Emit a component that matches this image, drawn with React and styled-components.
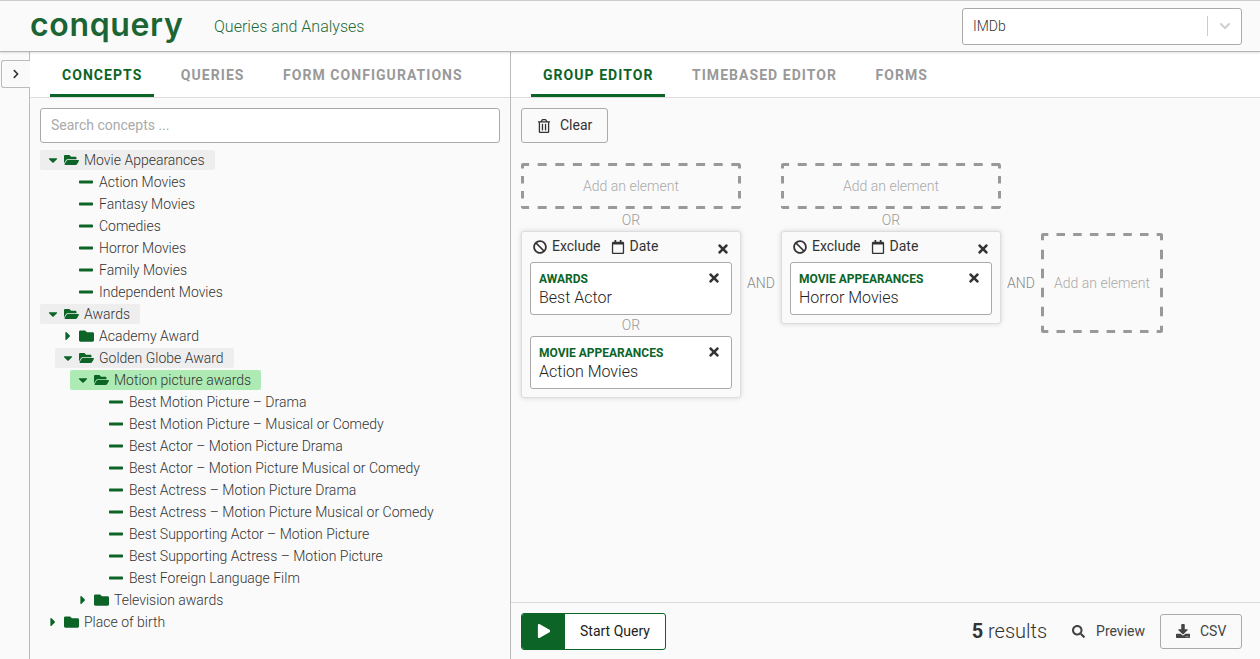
import React from "react";
import styled, { createGlobalStyle } from "styled-components";
import { FaFolder, FaFolderOpen, FaMinus, FaCaretDown, FaCaretRight, FaBan, FaRegCalendar, FaTimes, FaRegTrashAlt, FaPlay, FaSearch, FaDownload, FaChevronRight, FaChevronDown } from "react-icons/fa";

const green = "#0c6427";

const Global = createGlobalStyle`
  html, body { margin: 0; padding: 0; height: 100%; overflow: hidden; }
  body { font-family: Roboto, "Liberation Sans", sans-serif; background: #fafafa; color: #333; }
  * { box-sizing: border-box; }
`;

const Page = styled.div`
  width: 1260px; height: 659px; display: flex; flex-direction: column; overflow: hidden;
`;
const Header = styled.header`
  height: 52px; flex: none; display: flex; align-items: center; background: #fafafa;
  border-top: 1px solid #ccc; border-bottom: 1px solid #b5b5b5; box-shadow: 0 1px 2px rgba(0,0,0,.12);
  padding: 0 18px 0 30px; position: relative; z-index: 2;
`;
const Logo = styled.div`
  font-family: Inter, sans-serif; font-weight: 600; font-size: 32px; letter-spacing: 0.65px; color: #1b6535;
  line-height: 52px; width: 184px; margin-top: -3px;
`;
const Subtitle = styled.div`
  font-size: 16px; color: #1a6b3a; font-weight: 300; flex: 1;
`;
const Select = styled.div`
  width: 280px; height: 37px; background: #fff; border: 1px solid #aaa; border-radius: 3px;
  display: flex; align-items: center; padding-left: 10px; font-size: 14px; font-weight: 300; color: #333;
  span { flex: 1; }
`;
const SelectDivider = styled.i`
  width: 1px; height: 20px; background: #ccc; display: block;
`;
const SelectArrow = styled.div`
  width: 33px; display: flex; justify-content: center; color: #ccc; font-size: 12px;
`;
const Body = styled.div`flex: 1; display: flex; min-height: 0;`;
const Rail = styled.div`
  width: 30px; flex: none; border-right: 1px solid #bbb; padding-top: 8px; display: flex; flex-direction: column;
`;
const RailButton = styled.div`
  width: 29px; height: 28px; margin-left: 1px; background: #fafafa; border: 1px solid #bbb; border-right: none;
  border-radius: 3px 0 0 3px; display: flex; align-items: center; justify-content: center; color: #333; font-size: 10px;
`;
const Left = styled.section`
  width: 481px; flex: none; border-right: 1px solid #bbb; display: flex; flex-direction: column;
`;
const Tabs = styled.nav`
  height: 46px; flex: none; background: #fff; border-bottom: 1px solid #ddd; display: flex; padding-left: 20px; gap: 14.5px;
`;
const Tab = styled.div`
  height: 45px; padding: 15px 12px 0; font-size: 14px; font-weight: 700; letter-spacing: 1.05px; white-space: nowrap;
  color: ${p => p.$active ? green : "#999"};
  border-bottom: 3px solid ${p => p.$active ? green : "transparent"};
`;
const LeftContent = styled.div`padding: 10px; flex: 1; display: flex; flex-direction: column; align-items: stretch;`;
const Search = styled.div`
  height: 35px; background: #fff; border: 1px solid #aaa; border-radius: 3px; font-size: 14px; color: #aaa;
  display: flex; align-items: center; padding: 0 10px 2px; margin-bottom: 6px;
`;
const Row = styled.div`
  height: 22px; display: flex; align-items: center; padding-left: ${p => p.$depth * 15}px;
`;
const RowInner = styled.div`
  height: 20px; display: inline-flex; align-items: center; border-radius: 2px; font-size: 14px; font-weight: 300; color: #333;
  padding-right: 10px; white-space: nowrap;
  background: ${p => p.$bg || "transparent"};
`;
const Caret = styled.span`
  width: 14px; margin-left: 7px; margin-right: 2px; display: flex; justify-content: center; color: ${green}; font-size: 14px;
  svg { margin-left: -2px; }
`;
const Folder = styled.span`
  width: 16px; margin-right: 5px; display: flex; color: ${green}; font-size: 16px;
  svg { margin-left: 1px; }
`;
const Leaf = styled.span`
  width: 16px; display: flex; color: ${green}; font-size: 16px; margin-left: 38px; margin-right: 5px; flex: none;
`;
const Right = styled.section`flex: 1; display: flex; flex-direction: column; min-width: 0;`;
const RightMain = styled.div`flex: 1; padding: 10px; min-height: 0;`;
const ClearButton = styled.div`
  width: 87px; height: 35px; border: 1px solid #aaa; border-radius: 3px; font-size: 14px; color: #333;
  display: flex; align-items: center; padding: 0 0 2px 15px; gap: 9px; margin-bottom: 20px;
  svg { font-size: 14px; margin-top: 2px; }
`;
const Groups = styled.div`display: flex; align-items: flex-start;`;
const Column = styled.div`display: flex; flex-direction: column; width: 220px; align-items: stretch;`;
const Dropzone = styled.div`
  height: ${p => p.$h}px; width: ${p => p.$w}px; margin-top: ${p => p.$top || 0}px; color: #aaa; font-size: 14px; font-weight: 300;
  display: flex; align-items: center; justify-content: center; flex: none; position: relative;
`;
const DashFrame = styled.svg`
  position: absolute; inset: 0; width: 100%; height: 100%; border-radius: 3px;
`;
const Or = styled.div`
  height: ${p => p.$h || 22}px; line-height: ${p => p.$h || 22}px; text-align: center; font-size: 14px; font-weight: 300; color: #999; flex: none;
`;
const And = styled.div`
  width: 40px; flex: none; text-align: center; font-size: 14px; font-weight: 300; color: #888; margin-top: 110px; line-height: 20px;
`;
const Card = styled.div`
  background: #fafafa; border: 1px solid #ddd; border-radius: 3px; box-shadow: 0 0 5px rgba(0,0,0,.15); padding: 0 8px 8px;
`;
const CardHead = styled.div`
  height: 30px; display: flex; align-items: center; font-size: 14px; color: #333; padding: 0 0 2px 3px;
`;
const HeadItem = styled.span`
  display: inline-flex; align-items: center; gap: 5px; margin-right: 10px; svg { font-size: 14px; margin-top: 1px; }
`;
const CardClose = styled.span`
  margin-left: auto; margin-right: 2px; margin-top: 6px; display: flex; font-size: 14px; color: #333;
`;
const Node = styled.div`
  height: 53px; background: #fff; border: 1px solid #aaa; border-radius: 3px; padding: 9px 8px 0; position: relative;
`;
const NodeLabel = styled.div`
  font-size: 12px; line-height: 14px; font-weight: 700; color: ${green};
`;
const NodeTitle = styled.div`
  font-size: 16px; line-height: 22px; font-weight: 300; color: #222; margin-top: 1px;
`;
const NodeClose = styled.span`
  position: absolute; right: 10px; top: 8px; font-size: 14px; display: flex; color: #333;
`;
const Footer = styled.footer`
  height: 57px; flex: none; border-top: 1px solid #ddd; display: flex; align-items: center; padding: 0 18px 0 10px;
`;
const StartButton = styled.div`
  width: 145px; height: 37px; background: #fff; border: 1px solid ${green}; border-radius: 3px; display: flex; align-items: center; overflow: hidden;
  font-size: 14px; color: #222;
`;
const PlayBox = styled.span`
  width: 43px; height: 100%; background: ${green}; color: #fff; display: flex; align-items: center; justify-content: center; font-size: 14px; margin-right: 15px;
`;
const Results = styled.div`
  margin-left: auto; font-size: 20px; font-weight: 300; color: #333; margin-right: 25px;
  b { font-weight: 700; }
`;
const Preview = styled.div`
  display: flex; align-items: center; gap: 11px; font-size: 14px; color: #444; margin-right: 15px; svg { font-size: 13px; }
`;
const CsvButton = styled.div`
  width: 82px; height: 35px; border: 1px solid #aaa; border-radius: 3px; display: flex; align-items: center; padding-left: 15px; gap: 10px; font-size: 14px; color: #444;
`;

const tree = [
  [0, "open", "Movie Appearances", "#eee"],
  [1, "leaf", "Action Movies"], [1, "leaf", "Fantasy Movies"], [1, "leaf", "Comedies"], [1, "leaf", "Horror Movies"], [1, "leaf", "Family Movies"], [1, "leaf", "Independent Movies"],
  [0, "open", "Awards", "#eee"],
  [1, "closed", "Academy Award"],
  [1, "open", "Golden Globe Award", "#eee"],
  [2, "open", "Motion picture awards", "#aeeab4"],
  [3, "leaf", "Best Motion Picture – Drama"], [3, "leaf", "Best Motion Picture – Musical or Comedy"], [3, "leaf", "Best Actor – Motion Picture Drama"], [3, "leaf", "Best Actor – Motion Picture Musical or Comedy"], [3, "leaf", "Best Actress – Motion Picture Drama"], [3, "leaf", "Best Actress – Motion Picture Musical or Comedy"], [3, "leaf", "Best Supporting Actor – Motion Picture"], [3, "leaf", "Best Supporting Actress – Motion Picture"], [3, "leaf", "Best Foreign Language Film"],
  [2, "closed", "Television awards"],
  [0, "closed", "Place of birth"],
];

function TreeRow({ depth, kind, label, bg }) {
  if (kind === "leaf") {
    return <Row $depth={depth - 1}><RowInner><Leaf><FaMinus /></Leaf>{label}</RowInner></Row>;
  }
  const open = kind === "open";
  return (
    <Row $depth={depth}>
      <RowInner $bg={bg}>
        <Caret>{open ? <FaCaretDown /> : <FaCaretRight />}</Caret>
        <Folder>{open ? <FaFolderOpen /> : <FaFolder />}</Folder>
        {label}
      </RowInner>
    </Row>
  );
}

function AddElement({ w, h, top, hDash, vDash }) {
  const edge = (x1, y1, x2, y2, [period, dash, offset]) => (
    <line x1={x1} y1={y1} x2={x2} y2={y2} stroke="#999" strokeWidth="3"
      strokeDasharray={`${dash} ${period - dash}`} strokeDashoffset={offset} />
  );
  return (
    <Dropzone $w={w} $h={h} $top={top}>
      <DashFrame viewBox={`0 0 ${w} ${h}`}>
        {edge(0, 1.5, w, 1.5, hDash)}
        {edge(0, h - 1.5, w, h - 1.5, hDash)}
        {edge(1.5, 0, 1.5, h, vDash)}
        {edge(w - 1.5, 0, w - 1.5, h, vDash)}
      </DashFrame>
      Add an element
    </Dropzone>
  );
}

function QueryCard({ nodes }) {
  return (
    <Card>
      <CardHead>
        <HeadItem><FaBan />Exclude</HeadItem>
        <HeadItem><FaRegCalendar />Date</HeadItem>
        <CardClose><FaTimes /></CardClose>
      </CardHead>
      {nodes.map(([l, t], i) => (
        <React.Fragment key={t}>
          {i > 0 && <Or $h={21}>OR</Or>}
          <Node>
            <NodeLabel>{l}</NodeLabel>
            <NodeTitle>{t}</NodeTitle>
            <NodeClose><FaTimes /></NodeClose>
          </Node>
        </React.Fragment>
      ))}
    </Card>
  );
}

const wideH = [17.6, 9, 0.9];
const wideV = [15, 7.5, 2];
const tallH = [16.7, 8.5, 1.2];
const tallV = [19, 9.5, 2.25];

export default function App() {
  return (
    <Page>
      <Global />
      <Header>
        <Logo>conquery</Logo>
        <Subtitle>Queries and Analyses</Subtitle>
        <Select>
          <span>IMDb</span>
          <SelectDivider />
          <SelectArrow><FaChevronDown /></SelectArrow>
        </Select>
      </Header>
      <Body>
        <Rail><RailButton><FaChevronRight /></RailButton></Rail>
        <Left>
          <Tabs>
            <Tab $active>CONCEPTS</Tab>
            <Tab>QUERIES</Tab>
            <Tab>FORM CONFIGURATIONS</Tab>
          </Tabs>
          <LeftContent>
            <Search>Search concepts ...</Search>
            {tree.map(([d, k, l, bg]) => <TreeRow key={l} depth={d} kind={k} label={l} bg={bg} />)}
          </LeftContent>
        </Left>
        <Right>
          <Tabs>
            <Tab $active>GROUP EDITOR</Tab>
            <Tab>TIMEBASED EDITOR</Tab>
            <Tab>FORMS</Tab>
          </Tabs>
          <RightMain>
            <ClearButton><FaRegTrashAlt />Clear</ClearButton>
            <Groups>
              <Column>
                <AddElement w={220} h={46} hDash={wideH} vDash={wideV} />
                <Or>OR</Or>
                <QueryCard nodes={[["AWARDS", "Best Actor"], ["MOVIE APPEARANCES", "Action Movies"]]} />
              </Column>
              <And>AND</And>
              <Column>
                <AddElement w={220} h={46} hDash={wideH} vDash={wideV} />
                <Or>OR</Or>
                <QueryCard nodes={[["MOVIE APPEARANCES", "Horror Movies"]]} />
              </Column>
              <And>AND</And>
              <Column>
                <AddElement w={122} h={100} top={70} hDash={tallH} vDash={tallV} />
              </Column>
            </Groups>
          </RightMain>
          <Footer>
            <StartButton><PlayBox><FaPlay /></PlayBox>Start Query</StartButton>
            <Results><b>5</b> results</Results>
            <Preview><FaSearch />Preview</Preview>
            <CsvButton><FaDownload />CSV</CsvButton>
          </Footer>
        </Right>
      </Body>
    </Page>
  );
}
